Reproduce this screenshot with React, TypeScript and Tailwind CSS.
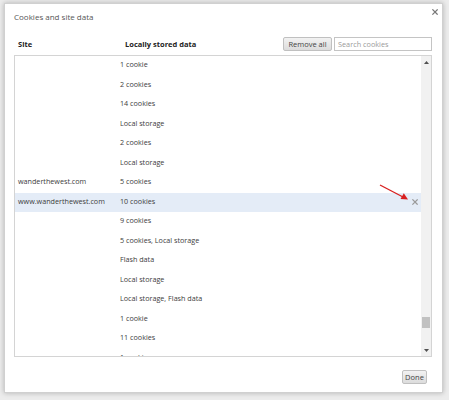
import React from "react";

const rows: { site: string; data: string; sel?: boolean }[] = [
  { site: "", data: "1 cookie" },
  { site: "", data: "2 cookies" },
  { site: "", data: "14 cookies" },
  { site: "", data: "Local storage" },
  { site: "", data: "2 cookies" },
  { site: "", data: "Local storage" },
  { site: "wanderthewest.com", data: "5 cookies" },
  { site: "www.wanderthewest.com", data: "10 cookies", sel: true },
  { site: "", data: "9 cookies" },
  { site: "", data: "5 cookies, Local storage" },
  { site: "", data: "Flash data" },
  { site: "", data: "Local storage" },
  { site: "", data: "Local storage, Flash data" },
  { site: "", data: "1 cookie" },
  { site: "", data: "11 cookies" },
  { site: "", data: "1 cookie" },
];

function XIcon({ color, size }: { color: string; size: number }) {
  return (
    <svg width={size} height={size} viewBox="0 0 8 8">
      <path d="M1 1 L7 7 M7 1 L1 7" stroke={color} strokeWidth="1.6" strokeLinecap="square" />
    </svg>
  );
}

export default function App() {
  return (
    <div className="relative w-[449px] h-[400px] bg-[#ececec] pt-[3px] pl-[4px] font-['Open_Sans',sans-serif] overflow-hidden">
      <div className="relative w-[439px] h-[390px] bg-white border border-[#d0d0d0] shadow-[0_0_5px_rgba(0,0,0,0.25)] flex flex-col">
        <div className="absolute left-[427px] top-[5px]">
          <XIcon color="#777777" size={6} />
        </div>
        <div className="pt-[8px] pl-[9px] h-[19px] text-[8px] leading-[10px] text-[#555555]">
          Cookies and site data
        </div>
        <div className="mt-[14px] h-[14px] flex items-center pl-[13px] pr-[10px]">
          <div className="w-[107px] text-[7.5px] font-bold text-[#222222] leading-[10px]">Site</div>
          <div className="flex-1 text-[7.5px] font-bold text-[#222222] leading-[10px]">Locally stored data</div>
          <div className="w-[49px] h-[14px] flex items-center justify-center border border-[#c0c0c0] rounded-[2px] bg-gradient-to-b from-[#f2f2f2] to-[#dcdcdc] text-[7.5px] text-[#444444] leading-[10px]">
            Remove all
          </div>
          <div className="ml-[2px] w-[98px] h-[14px] flex items-center border border-[#c4c4c4] bg-white pl-[3px] text-[7.3px] text-[#9a9a9a] leading-[10px]">
            Search cookies
          </div>
        </div>
        <div className="mt-[4px] ml-[9px] w-[418px] h-[302px] border border-[#d4d4d4] flex overflow-hidden">
          <div className="w-[406px] flex flex-col overflow-hidden">
            {rows.map((r, i) => (
              <div
                key={i}
                className={
                  "shrink-0 h-[19.5px] flex items-center pb-[3px] text-[7.2px] leading-[10px] text-[#3c3c3c] " +
                  (r.sel ? "bg-[#e4ecf7]" : "")
                }
              >
                <div className="w-[105px] pl-[3px] whitespace-nowrap">{r.site}</div>
                <div className="flex-1 whitespace-nowrap">{r.data}</div>
                {r.sel && (
                  <div className="pr-[3px] pt-[3px]">
                    <XIcon color="#9a9a9a" size={6} />
                  </div>
                )}
              </div>
            ))}
          </div>
          <div className="w-[10px] bg-[#f1f1f1] flex flex-col">
            <div className="h-[12px] flex items-center justify-center">
              <svg width="5" height="3" viewBox="0 0 5 3">
                <path d="M0 3 L2.5 0 L5 3 Z" fill="#505050" />
              </svg>
            </div>
            <div className="flex-1" />
            <div className="mx-[1px] h-[11px] bg-[#c1c1c1]" />
            <div className="h-[16px]" />
            <div className="h-[12px] flex items-center justify-center">
              <svg width="5" height="3" viewBox="0 0 5 3">
                <path d="M0 0 L5 0 L2.5 3 Z" fill="#505050" />
              </svg>
            </div>
          </div>
        </div>
        <div className="mt-[13px] flex justify-end pr-[15px]">
          <div className="w-[25px] h-[14px] flex items-center justify-center border border-[#c0c0c0] rounded-[2px] bg-gradient-to-b from-[#f2f2f2] to-[#dcdcdc] text-[7.5px] text-[#444444] leading-[10px]">
            Done
          </div>
        </div>
      </div>
      <svg className="absolute left-[376px] top-[180px]" width="40" height="24" viewBox="0 0 40 24">
        <path d="M4 5 L27 17" stroke="#d82020" strokeWidth="1.4" />
        <path d="M32 19.5 L24.5 19 L27.8 13.2 Z" fill="#d82020" />
      </svg>
    </div>
  );
}
